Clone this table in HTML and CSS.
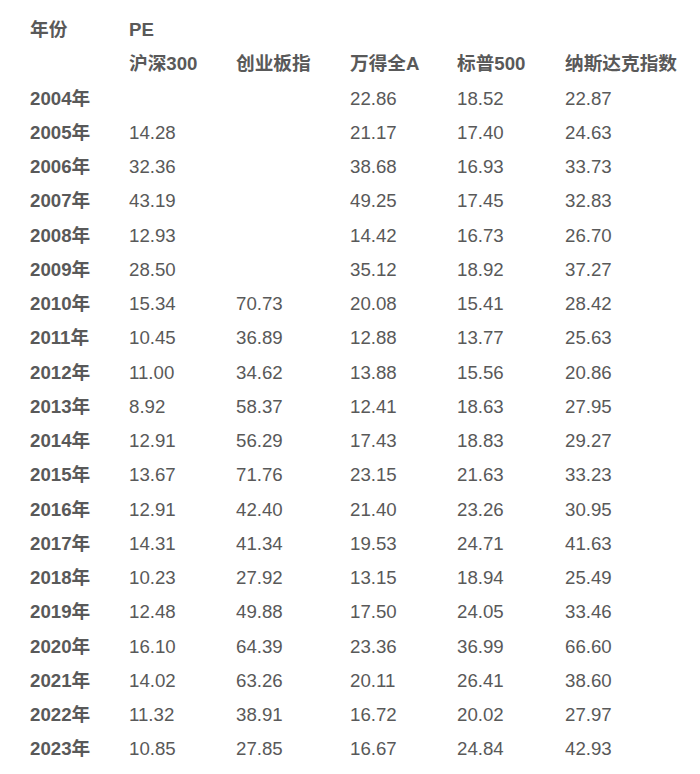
FILE: index.html
```html
<!DOCTYPE html>
<html lang="zh">
<head>
<meta charset="utf-8">
<link rel="stylesheet" href="styles.css">
</head>
<body>
<table class="pe">
<colgroup>
<col class="c-year"><col class="c1"><col class="c2"><col class="c3"><col class="c4"><col class="c5">
</colgroup>
<thead>
<tr><th>年份</th><th>PE</th><th></th><th></th><th></th><th></th></tr>
<tr><th></th><th>沪深300</th><th>创业板指</th><th>万得全A</th><th>标普500</th><th>纳斯达克指数</th></tr>
</thead>
<tbody>
<tr><th>2004年</th><td></td><td></td><td>22.86</td><td>18.52</td><td>22.87</td></tr>
<tr><th>2005年</th><td>14.28</td><td></td><td>21.17</td><td>17.40</td><td>24.63</td></tr>
<tr><th>2006年</th><td>32.36</td><td></td><td>38.68</td><td>16.93</td><td>33.73</td></tr>
<tr><th>2007年</th><td>43.19</td><td></td><td>49.25</td><td>17.45</td><td>32.83</td></tr>
<tr><th>2008年</th><td>12.93</td><td></td><td>14.42</td><td>16.73</td><td>26.70</td></tr>
<tr><th>2009年</th><td>28.50</td><td></td><td>35.12</td><td>18.92</td><td>37.27</td></tr>
<tr><th>2010年</th><td>15.34</td><td>70.73</td><td>20.08</td><td>15.41</td><td>28.42</td></tr>
<tr><th>2011年</th><td>10.45</td><td>36.89</td><td>12.88</td><td>13.77</td><td>25.63</td></tr>
<tr><th>2012年</th><td>11.00</td><td>34.62</td><td>13.88</td><td>15.56</td><td>20.86</td></tr>
<tr><th>2013年</th><td>8.92</td><td>58.37</td><td>12.41</td><td>18.63</td><td>27.95</td></tr>
<tr><th>2014年</th><td>12.91</td><td>56.29</td><td>17.43</td><td>18.83</td><td>29.27</td></tr>
<tr><th>2015年</th><td>13.67</td><td>71.76</td><td>23.15</td><td>21.63</td><td>33.23</td></tr>
<tr><th>2016年</th><td>12.91</td><td>42.40</td><td>21.40</td><td>23.26</td><td>30.95</td></tr>
<tr><th>2017年</th><td>14.31</td><td>41.34</td><td>19.53</td><td>24.71</td><td>41.63</td></tr>
<tr><th>2018年</th><td>10.23</td><td>27.92</td><td>13.15</td><td>18.94</td><td>25.49</td></tr>
<tr><th>2019年</th><td>12.48</td><td>49.88</td><td>17.50</td><td>24.05</td><td>33.46</td></tr>
<tr><th>2020年</th><td>16.10</td><td>64.39</td><td>23.36</td><td>36.99</td><td>66.60</td></tr>
<tr><th>2021年</th><td>14.02</td><td>63.26</td><td>20.11</td><td>26.41</td><td>38.60</td></tr>
<tr><th>2022年</th><td>11.32</td><td>38.91</td><td>16.72</td><td>20.02</td><td>27.97</td></tr>
<tr><th>2023年</th><td>10.85</td><td>27.85</td><td>16.67</td><td>24.84</td><td>42.93</td></tr>
</tbody>
</table>
</body>
</html>
```

FILE: styles.css
```css
html, body {
  margin: 0;
  padding: 0;
  background: #ffffff;
}
body {
  padding: 13px 0 0 30px;
  font-family: "Liberation Sans", Arial, "Noto Sans CJK SC", sans-serif;
  font-size: 18.67px;
  color: #595959;
}
.pe {
  border-collapse: collapse;
  table-layout: fixed;
  width: 665px;
}
.c-year { width: 99px; }
.c1 { width: 107px; }
.c2 { width: 114px; }
.c3 { width: 107px; }
.c4 { width: 108px; }
.c5 { width: 130px; }
.pe th, .pe td {
  height: 34.26px;
  padding: 0;
  text-align: left;
  vertical-align: middle;
  line-height: 20px;
  white-space: nowrap;
}
.pe th {
  font-weight: bold;
}
.pe td {
  font-weight: normal;
}
```
